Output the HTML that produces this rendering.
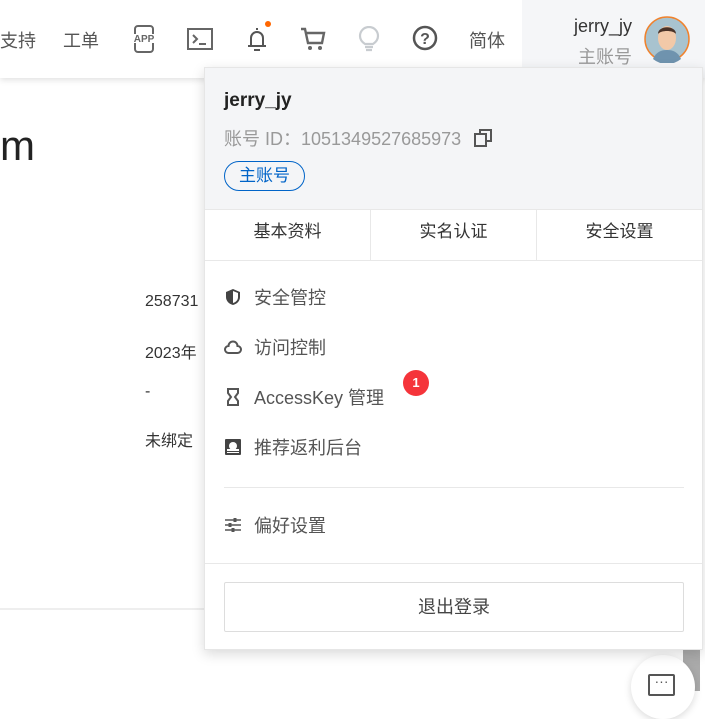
<!DOCTYPE html>
<html><head><meta charset="utf-8"><style>
*{margin:0;padding:0;box-sizing:border-box}
body{width:705px;height:691px;overflow:hidden;background:#fff;font-family:"Liberation Sans","Noto Sans CJK SC",sans-serif;position:relative;color:#333}
.hdr{position:absolute;left:0;top:0;width:705px;height:78px;background:#fff;box-shadow:0 2px 6px rgba(0,0,0,.12)}
.hdr .t{position:absolute;top:27px;font-size:18px;color:#555}
.user{position:absolute;left:522px;top:0;width:183px;height:78px;background:#f5f6f8}
.ic{position:absolute}
.dd{position:absolute;left:204px;top:67px;width:499px;height:583px;background:#fff;border:1px solid #e6e6e6;box-shadow:0 4px 12px rgba(0,0,0,.15)}
.head{height:142px;background:#f4f5f7;border-bottom:1px solid #e8e8e8;padding:22px 0 0 19px}
.tabs{display:flex;height:51px;border-bottom:1px solid #e8e8e8}
.tabs div{flex:1;text-align:center;line-height:44px;font-size:17px;color:#333;border-right:1px solid #e8e8e8}
.tabs div:last-child{border-right:none}
.item{position:absolute;left:19px;font-size:18px;color:#555;display:flex;align-items:center}
.item svg{margin-right:12px}
</style></head><body>
<div style="position:absolute;left:0;top:122px;font-size:42px;color:#222">m</div>
<div style="position:absolute;left:145px;top:293px;font-size:16px;color:#333">258731</div>
<div style="position:absolute;left:145px;top:339px;font-size:16px;color:#333">2023年</div>
<div style="position:absolute;left:145px;top:383px;font-size:16px;color:#333">-</div>
<div style="position:absolute;left:145px;top:427px;font-size:16px;color:#333">未绑定</div>
<div style="position:absolute;left:0;top:608px;width:204px;height:2px;background:#eee"></div>
<div style="position:absolute;left:683px;top:650px;width:17px;height:41px;background:#aaa"></div>
<div style="position:absolute;left:631px;top:655px;width:64px;height:64px;border-radius:50%;background:#fff;box-shadow:0 2px 8px rgba(0,0,0,.15)"></div>
<div style="position:absolute;left:648px;top:674px;width:27px;height:22px;border:2px solid #555;border-radius:2px;font-size:14px;line-height:10px;text-align:center;color:#555">···</div>

<div class="hdr">
<div class="t" style="left:0">支持</div>
<div class="t" style="left:63px">工单</div>
<svg class="ic" style="left:131px;top:25px" width="26" height="28" viewBox="0 0 26 28"><rect x="4" y="1" width="18" height="26" rx="3" fill="none" stroke="#666" stroke-width="2"/><rect x="0" y="9" width="26" height="9" fill="#fff"/><text x="13" y="17" font-size="10" font-weight="bold" fill="#666" text-anchor="middle" font-family="Liberation Sans">APP</text></svg>
<svg class="ic" style="left:187px;top:28px" width="26" height="22"><rect x="1" y="1" width="24" height="20" fill="none" stroke="#666" stroke-width="2"/><path d="M6 7l4 4-4 4M12 16h7" stroke="#666" stroke-width="2" fill="none"/></svg>
<svg class="ic" style="left:245px;top:21px" width="26" height="32"><path d="M12 7v2M6 25V17a6 6 0 0 1 12 0v8M3 25h18M9 29h6" stroke="#555" stroke-width="2" fill="none"/><circle cx="23" cy="3" r="3" fill="#f60"/></svg>
<svg class="ic" style="left:300px;top:27px" width="26" height="26"><path d="M1 2h4l3 14h14l2-10H6" stroke="#666" stroke-width="2.4" fill="none"/><circle cx="10" cy="21" r="2" fill="#666"/><circle cx="20" cy="21" r="2" fill="#666"/></svg>
<svg class="ic" style="left:358px;top:26px" width="22" height="26"><path d="M7 18c-3-2-5-5-5-8a9 9 0 0 1 18 0c0 3-2 6-5 8z" stroke="#c8ccd0" stroke-width="2.2" fill="none"/><path d="M7 21h8M8 24h6" stroke="#c8ccd0" stroke-width="2.2"/></svg>
<svg class="ic" style="left:412px;top:25px" width="26" height="26"><circle cx="13" cy="13" r="11" stroke="#555" stroke-width="2.5" fill="none"/><text x="13" y="19" font-size="16" font-weight="bold" fill="#555" text-anchor="middle" font-family="Liberation Sans">?</text></svg>
<div class="t" style="left:469px">简体</div>
<div class="user">
<div style="position:absolute;right:73px;top:16px;font-size:18px;color:#333">jerry_jy</div>
<div style="position:absolute;right:73px;top:43px;font-size:18px;color:#999">主账号</div>
<svg style="position:absolute;left:122px;top:15px" width="46" height="48" viewBox="0 0 46 48"><circle cx="23" cy="24" r="22" fill="#a8c3cf" stroke="#f0822d" stroke-width="1.5"/><path d="M9 44c3-7 8-9 14-9s11 2 14 9a22 22 0 0 1-28 0z" fill="#6f93ae"/><ellipse cx="23" cy="23" rx="9" ry="12" fill="#f2c9a8"/><path d="M14 19c0-9 18-9 18 0c-3-4-15-4-18 0z" fill="#4a3328"/></svg>
</div>
</div>

<div class="dd">
<div class="head">
<div style="font-size:19px;font-weight:bold;color:#222">jerry_jy</div>
<div style="font-size:18px;color:#999;margin-top:13px">账号 ID：1051349527685973 <svg width="18" height="18" style="vertical-align:-2px;margin-left:8px"><rect x="1" y="5" width="11" height="12" fill="none" stroke="#555" stroke-width="2"/><path d="M6 5V1h11v11h-5" fill="none" stroke="#555" stroke-width="2"/></svg></div>
<div style="display:inline-block;margin-top:10px;border:1px solid #0064c8;border-radius:15px;padding:0 14px;line-height:28px;font-size:17px;color:#0064c8">主账号</div>
</div>
<div class="tabs"><div>基本资料</div><div>实名认证</div><div>安全设置</div></div>
<div class="item" style="top:216px"><svg width="18" height="18"><path d="M9 1L2 4v5c0 4 3 7 7 8 4-1 7-4 7-8V4z" fill="#444"/><path d="M9 3v12c3-1 5-3 5-6V5z" fill="#fff"/></svg>安全管控</div>
<div class="item" style="top:266px"><svg width="18" height="18"><path d="M4.5 15a3.5 3.5 0 0 1 0-7 4.5 4.5 0 0 1 9 0 3.5 3.5 0 0 1 0 7z" fill="none" stroke="#555" stroke-width="2"/></svg>访问控制</div>
<div class="item" style="top:316px"><svg width="18" height="18"><path d="M4 1h10v4l-3 4 3 4v4H4v-4l3-4-3-4z" fill="none" stroke="#555" stroke-width="2"/></svg>AccessKey 管理</div>
<div style="position:absolute;left:198px;top:302px;width:26px;height:26px;border-radius:50%;background:#f5343a;color:#fff;font-size:13px;font-weight:bold;text-align:center;line-height:26px">1</div>
<div class="item" style="top:366px"><svg width="18" height="18"><rect x="1" y="1" width="16" height="16" rx="1" fill="#444"/><circle cx="9" cy="8" r="4" fill="#fff"/><rect x="3" y="11" width="12" height="2" fill="#fff"/><rect x="3" y="14" width="12" height="1" fill="#fff"/></svg>推荐返利后台</div>
<div style="position:absolute;left:19px;top:419px;width:460px;height:1px;background:#e8e8e8"></div>
<div class="item" style="top:444px"><svg width="18" height="18"><path d="M1 4h16M1 9h16M1 14h16" stroke="#555" stroke-width="1.5"/><path d="M11 2v4M6 7v4M9 12v4" stroke="#555" stroke-width="3"/></svg>偏好设置</div>
<div style="position:absolute;left:0;top:495px;width:497px;height:1px;background:#e8e8e8"></div>
<div style="position:absolute;left:19px;top:514px;width:460px;height:50px;border:1px solid #ddd;border-radius:2px;text-align:center;line-height:48px;font-size:18px;color:#444">退出登录</div>
</div>
</body></html>
